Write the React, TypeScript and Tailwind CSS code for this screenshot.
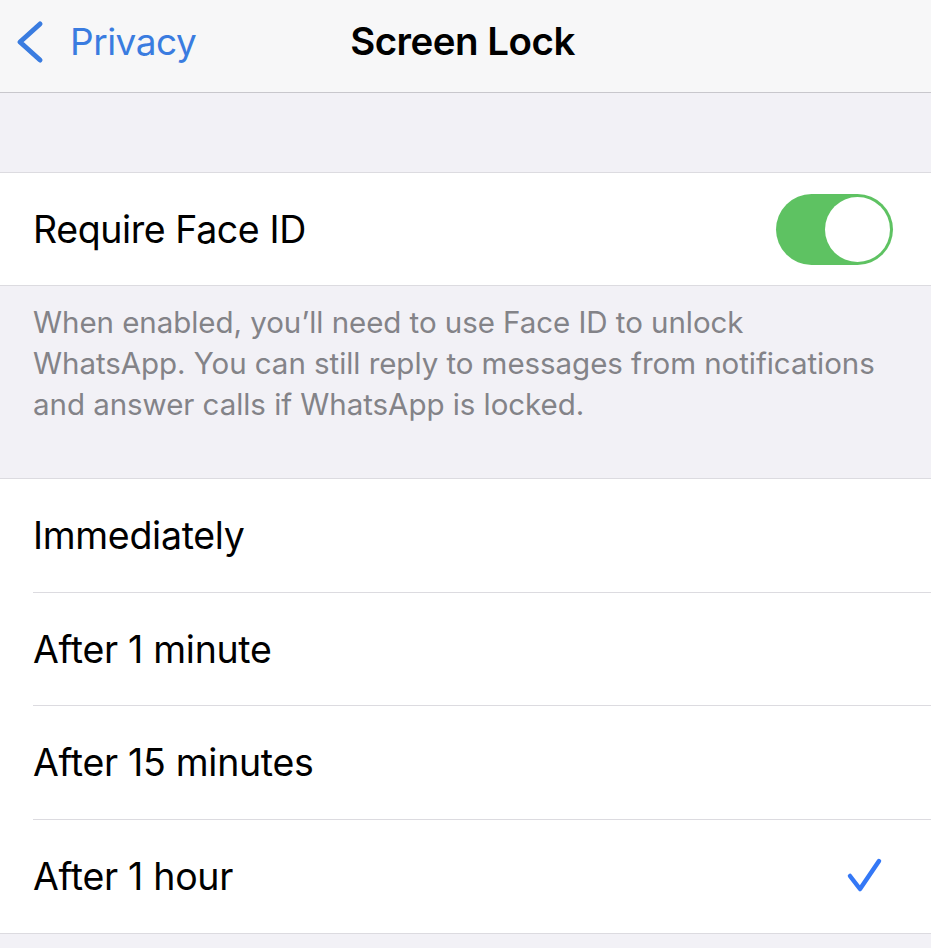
const options = ["Immediately", "After 1 minute", "After 15 minutes", "After 1 hour"];

function Toggle({ on }: { on: boolean }) {
  return (
    <div
      className={`w-[117px] h-[71px] rounded-full p-[3px] flex ${
        on ? "bg-[#5ec262] justify-end" : "bg-[#e5e5ea] justify-start"
      }`}
    >
      <div className="w-[65px] h-[65px] rounded-full bg-white" />
    </div>
  );
}

export default function App() {
  const selected = "After 1 hour";

  return (
    <div
      className="w-[931px] h-[948px] bg-[#f2f1f6] overflow-hidden"
      style={{ fontFamily: "Inter, 'Liberation Sans', sans-serif" }}
    >
      <header className="h-[93px] bg-[#f7f7f8] border-b border-[#c8c7cc] relative flex items-center">
        <button className="flex items-center pl-[14px] text-[#3a7ce0] pb-[8px]">
          <svg width="32" height="44" viewBox="0 0 32 44" fill="none">
            <path
              d="M26 4 L6 22 L26 40"
              stroke="currentColor"
              strokeWidth="5"
              strokeLinecap="round"
              strokeLinejoin="round"
            />
          </svg>
          <span className="ml-[24px] text-[37px] tracking-[-0.5px] leading-none pb-[2px]">
            Privacy
          </span>
        </button>
        <h1 className="absolute left-0 right-0 text-center pr-[6px] text-[38.5px] font-semibold tracking-[-0.5px] text-black leading-none pointer-events-none pb-[10px]">
          Screen Lock
        </h1>
      </header>

      <div className="h-[79px]" />

      <div className="bg-white border-y border-[#dcdbe0] h-[114px] flex items-center justify-between pl-[33px] pr-[38px]">
        <span className="text-[37.5px] tracking-[-0.4px] text-black pt-[2px]">Require Face ID</span>
        <Toggle on />
      </div>

      <div className="px-[33px] pt-[16px] h-[192px] text-[29.5px] tracking-[-0.05px] leading-[41px] text-[#838388]">
        When enabled, you’ll need to use Face ID to unlock
        <br />
        WhatsApp. You can still reply to messages from notifications
        <br />
        and answer calls if WhatsApp is locked.
      </div>

      <div className="bg-white border-y border-[#dcdbe0] pl-[33px]">
        {options.map((opt, i) => (
          <div
            key={opt}
            className={`h-[113.5px] flex items-center justify-between pr-[46px] ${
              i < options.length - 1 ? "border-b border-[#dcdbe0]" : ""
            }`}
          >
            <span className="text-[37.5px] tracking-[-0.3px] text-black pt-[2px]">{opt}</span>
            {opt === selected && (
              <svg width="40" height="40" viewBox="0 0 40 40" fill="none" className="text-[#3478f6]">
                <path
                  d="M5 20 L15 33 L34 5"
                  stroke="currentColor"
                  strokeWidth="4.5"
                  strokeLinecap="round"
                  strokeLinejoin="round"
                />
              </svg>
            )}
          </div>
        ))}
      </div>
    </div>
  );
}
